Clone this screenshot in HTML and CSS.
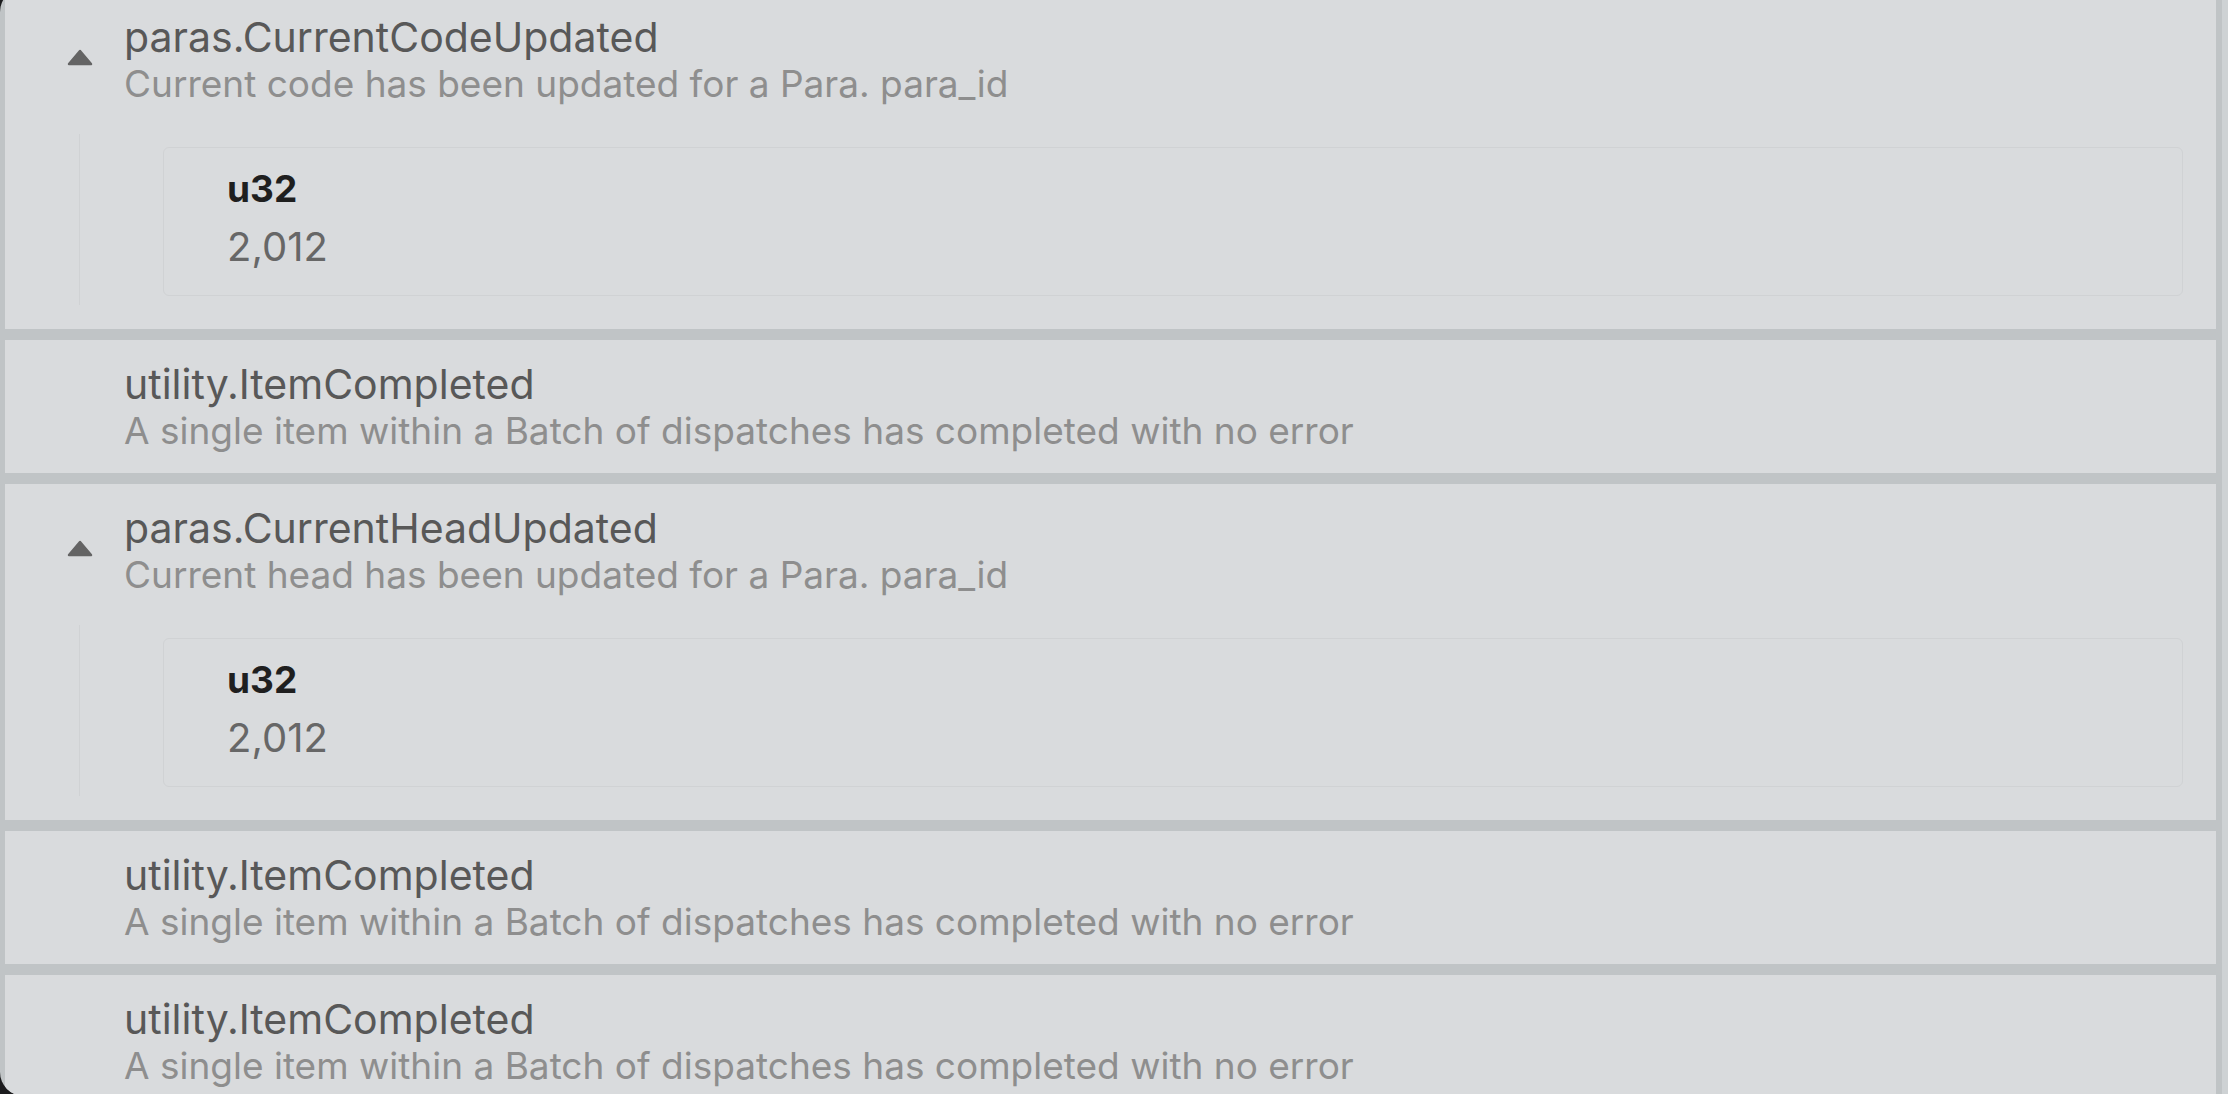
FILE: index.html
```html
<!DOCTYPE html>
<html>
<head>
<title>Events</title>
<meta name="viewport" content="width=device-width, initial-scale=1">
<link rel="stylesheet" href="styles.css">
</head>
<body>

<div class="window">
	<div class="events">

		<div class="event">
			<div class="event-head">
				<svg class="caret" width="26" height="17" viewBox="0 0 26 17"><polygon points="13,2 24,15 2,15"/></svg>
				<div class="event-text">
					<div class="event-name">paras.CurrentCodeUpdated</div>
					<div class="event-doc">Current code has been updated for a Para. para_id</div>
				</div>
			</div>
			<div class="event-args">
				<div class="arg">
					<div class="arg-type">u32</div>
					<div class="arg-value">2,012</div>
				</div>
			</div>
		</div>

		<div class="event">
			<div class="event-head">
				<span class="caret-space"></span>
				<div class="event-text">
					<div class="event-name">utility.ItemCompleted</div>
					<div class="event-doc">A single item within a Batch of dispatches has completed with no error</div>
				</div>
			</div>
		</div>

		<div class="event">
			<div class="event-head">
				<svg class="caret" width="26" height="17" viewBox="0 0 26 17"><polygon points="13,2 24,15 2,15"/></svg>
				<div class="event-text">
					<div class="event-name">paras.CurrentHeadUpdated</div>
					<div class="event-doc">Current head has been updated for a Para. para_id</div>
				</div>
			</div>
			<div class="event-args">
				<div class="arg">
					<div class="arg-type">u32</div>
					<div class="arg-value">2,012</div>
				</div>
			</div>
		</div>

		<div class="event">
			<div class="event-head">
				<span class="caret-space"></span>
				<div class="event-text">
					<div class="event-name">utility.ItemCompleted</div>
					<div class="event-doc">A single item within a Batch of dispatches has completed with no error</div>
				</div>
			</div>
		</div>

		<div class="event">
			<div class="event-head">
				<span class="caret-space"></span>
				<div class="event-text">
					<div class="event-name">utility.ItemCompleted</div>
					<div class="event-doc">A single item within a Batch of dispatches has completed with no error</div>
				</div>
			</div>
		</div>

	</div>
</div>

</body>
</html>
```

FILE: styles.css
```css
html, body {
	margin: 0;
	height: 100%;
	overflow: hidden;
	background: #1c1c1e;
}
body {
	font-family: Inter, "Liberation Sans", sans-serif;
}

/* window frame: rounded left corners, grey gutter, scrollbar track on the right */
.window {
	margin-top: -12px;
	height: calc(100% + 14px);
	border-radius: 24px 0 0 24px;
	overflow: hidden;
	background: #c0c4c6;
	padding-left: 5px;
	padding-right: 6px;
	border-right: 6px solid #ced2d4;
	box-sizing: border-box;
}

.events {
	display: flex;
	flex-direction: column;
	gap: 11px;
	margin-top: 5px;
}

.event {
	background: #d9dbdd;
	padding: 20px 0 20px 0;
}

.event-head {
	display: flex;
	align-items: flex-start;
}
.caret, .caret-space {
	flex: none;
	width: 26px;
	height: 17px;
	margin: 36px 31px 0 62px;
}
.caret polygon {
	fill: #646464;
	stroke: #646464;
	stroke-width: 2.5;
	stroke-linejoin: round;
}

.event-name {
	font-size: 41px;
	line-height: 49px;
	color: #585858;
}
.event-doc {
	font-size: 37px;
	line-height: 44px;
	color: #8e8e8e;
}

/* expanded event arguments */
.event-args {
	margin: 28px 33px 4px 74px;
	padding: 13px 0 9px 83px;
	border-left: 1px solid #d0d2d4;
}
.arg {
	border: 1px solid #d0d2d4;
	border-radius: 6px;
	padding: 19px 0 24px 63px;
}
.arg-type {
	font-size: 37px;
	line-height: 44px;
	font-weight: 700;
	color: #1f1f1f;
}
.arg-value {
	margin-top: 12px;
	font-size: 40px;
	line-height: 48px;
	color: #676767;
}
```
